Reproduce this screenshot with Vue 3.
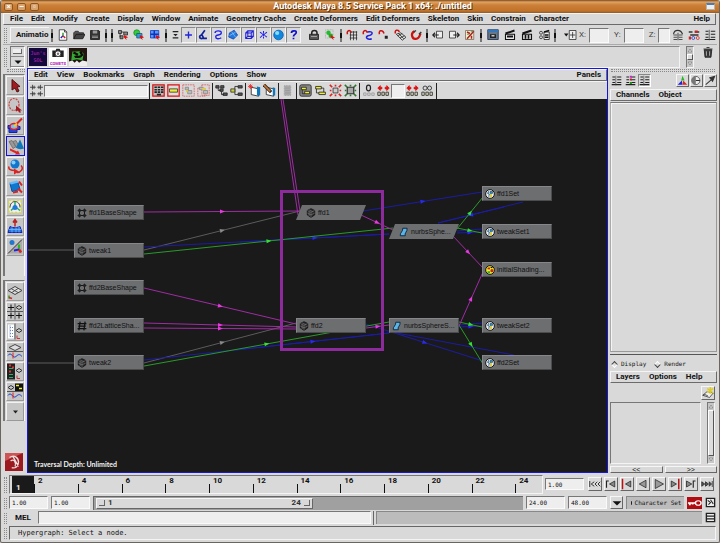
<script setup>
const icons = {
  newScene: '<path d="M3 1h7l3 3v11H3z" fill="#fff" stroke="#222"/><path d="M10 1v3h3" fill="none" stroke="#222"/><path d="M8 9V5" stroke="#2a2" stroke-width="2"/><path d="M8 9l-3 3" stroke="#22d" stroke-width="2"/><path d="M8 9l3 3" stroke="#d22" stroke-width="2"/>',
  open: '<path d="M1 13V5l2-2h4l1 2h6v2" fill="#555" stroke="#222"/><path d="M1 13l3-6h12l-3 6z" fill="#444" stroke="#111"/>',
  save: '<path d="M2 2h11l1 1v11H2z" fill="#333" stroke="#111"/><path d="M5 2h6v4H5z" fill="#999"/><path d="M4 9h8v1H4zM4 11h8v1H4z" fill="#aaa"/>',
  selHier: '<path d="M2 2h4v4H2zM9 4h5v4H9zM4 9h4v4H4z" fill="#888" stroke="#222"/><path d="M4 6v5M6 4h3" stroke="#222"/><path d="M9 8l6 3-3 1 1 3-4-4z" fill="#d11"/>',
  selObj: '<circle cx="5" cy="5" r="4" fill="#3c3" stroke="#183"/><path d="M5 6h7v6H5z" fill="#39d" stroke="#157"/><path d="M9 8l6 3-3 1 1 3-4-4z" fill="#d11"/>',
  selComp: '<path d="M2 2h11v10H2z" fill="#59f" stroke="#13b"/><path d="M7 2v10M2 7h11" stroke="#13b" stroke-width="2"/><path d="M9 8l6 3-3 1 1 3-4-4z" fill="#d11"/>',
  collapse: '<path d="M3 1h10v2H3zM3 12h10v2H3zM4 6h8l-4 4z" fill="#222"/>',
  plus: '<path d="M8 3v10M3 8h10" stroke="#22d" stroke-width="2"/>',
  handle: '<path d="M10 1L5 8M5 8c-4 1-3 6 1 5 3 0 1-4-1-5zM7 13h6" fill="none" stroke="#129" stroke-width="2.5"/>',
  curve: '<path d="M3 5c0-4 10-4 9 0 0 4-9 2-8 6 0 3 5 3 8 1" fill="none" stroke="#22e" stroke-width="2"/>',
  surface: '<path d="M2 5l7-4 5 7-6 6-7-3z" fill="#27d" stroke="#13a"/><path d="M5 3l6 8M2 9l9-5" stroke="#8cf"/>',
  lattice: '<path d="M4 5h8v8H4zM7 2h8v8H7zM4 5l3-3M12 5l3-3M12 13l3-3M4 13l3-3" fill="none" stroke="#22d" stroke-width="1.500"/>',
  particles: '<path d="M8 2v3M3 4l3 2M13 4l-3 2M3 12l3-3M8 13v-3M13 11l-3-2" stroke="#22e" stroke-width="1.500"/><circle cx="8" cy="7.500" r="2" fill="#22e"/>',
  ball: '<circle cx="8" cy="8" r="7" fill="#18d" stroke="#05a"/><circle cx="6" cy="5" r="3" fill="#8df"/>',
  question: '<path d="M5 5c0-4 7-4 7-1 0 3-4 3-4 6M8 12v2" fill="none" stroke="#11c" stroke-width="2.500"/>',
  lock: '<path d="M5 8V5c0-4 7-4 7 0v3" fill="none" stroke="#222" stroke-width="2"/><path d="M2 7h12v7H2z" fill="#555" stroke="#111"/><path d="M4 10h8" stroke="#bbb"/>',
  highlight: '<path d="M2 1h10v11H2z" fill="none" stroke="#999" stroke-dasharray="1 1"/><circle cx="6" cy="5" r="3" fill="#2b3"/><circle cx="9" cy="9" r="3" fill="#2a2"/><path d="M9 8l6 4-3 0 1 3-4-4z" fill="#d11"/>',
  snapGrid: '<path d="M5 4h10M5 8h10M5 12h10M6 3v12M10 3v12M14 3v12" stroke="#222"/><path d="M2 7c-2-5 4-7 5-2" fill="none" stroke="#c11" stroke-width="2"/>',
  snapCurve: '<path d="M7 4c9-2 8 4 1 5-5 2 0 6 5 4" fill="none" stroke="#22d" stroke-width="2"/><path d="M2 7c-2-5 4-7 5-2" fill="none" stroke="#c11" stroke-width="2"/>',
  snapPoint: '<path d="M9 9h4v4H9z" fill="#222"/><path d="M2 7c-2-5 4-7 6-1" fill="none" stroke="#c11" stroke-width="2"/>',
  snapPlane: '<path d="M3 7l6-2 7 6-5 4zM6 6l7 7M5 9l6-3M8 12l6-3" fill="none" stroke="#222"/><path d="M2 6c-2-5 4-6 5-2" fill="none" stroke="#c11" stroke-width="2"/>',
  magnet: '<path d="M6 3C0 6 3 14 8 13c4 0 5-4 6-7" fill="none" stroke="#c11" stroke-width="3"/><path d="M5 4l3-2M12 7l3-3" stroke="#333" stroke-width="2"/>',
  inConn: '<path d="M6 3h8v9H6z" fill="#eee" stroke="#222"/><path d="M1 8h8M4 5L1 8l3 3" fill="none" stroke="#222" stroke-width="1.5"/>',
  outConn: '<path d="M2 3h8v9H2z" fill="#eee" stroke="#222"/><path d="M7 8h8M12 5l3 3-3 3" fill="none" stroke="#222" stroke-width="1.5"/>',
  history: '<path d="M2 2h11v12H2z" fill="#eec" stroke="#765"/><path d="M4 13l9-10M4 4l4 2M10 9v4" stroke="#a22" stroke-width="2"/><path d="M4 7h3M9 3h3" stroke="#383"/>',
  renderView: '<path d="M1 1h14v13H1z" fill="#678" stroke="#124"/><path d="M1 1h14v3H1z" fill="#37b"/><path d="M4 7h8v5H4z" fill="#222"/><path d="M6 8h4v2H6z" fill="#ccc"/>',
  clap: '<path d="M2 7h12v7H2z" fill="#eee" stroke="#111" stroke-width="1.500"/><path d="M2 6l12-4M4 10h8" stroke="#111" stroke-width="2.500"/>',
  clapIpr: '<path d="M2 7h12v7H2z" fill="#ccc" stroke="#111" stroke-width="1.500"/><path d="M2 6l12-4" stroke="#111" stroke-width="3"/><path d="M6 8v5M10 8v5" stroke="#111" stroke-width="2"/>',
  clapSet: '<path d="M8 4h7v10H8z" fill="#eee" stroke="#111"/><path d="M8 4l7-2M9 8h5M9 11h5" stroke="#111" stroke-width="2"/><circle cx="4" cy="5" r="2" fill="none" stroke="#222"/><circle cx="4" cy="11" r="2" fill="none" stroke="#222"/>',
  coord: '<path d="M0 6h6l-3 4z" fill="#111"/><path d="M7 2h9v12H7z" fill="#eee" stroke="#222"/><path d="M11.500 4v8M8 8h7" stroke="#222"/>',
  attr: '<path d="M2 3h4M2 7h4M2 11h4M9 3h6M9 7h6M9 11h6M1 14h14" stroke="#222" stroke-width="1.500"/><path d="M7 1v14" stroke="#444"/>',
  toolSet: '<path d="M2 7C3 0 12 0 14 7" fill="none" stroke="#333" stroke-width="1.500"/><path d="M2 8h5M9 8h5M2 11h5M9 11h5M2 14h5M9 14h5M8 5v10" stroke="#222"/>',
  chanBox: '<path d="M1 4h5M9 4h6M3 8h11" stroke="#333" stroke-width="2"/><path d="M9 2h4v3H9zM1 10h3v4H1z" fill="#c22"/><circle cx="7" cy="12" r="2" fill="none" stroke="#23c"/><circle cx="13" cy="12" r="2" fill="none" stroke="#c22"/>',
  trash: '<path d="M3 5h10l-1 10H4z" fill="#444" stroke="#111"/><path d="M2 4h12M6 2h4M6 7v6M8 7v6M10 7v6" stroke="#111"/><path d="M6 7v6M10 7v6" stroke="#ccc"/>',
  arrow: '<path d="M5 2l8 7-3 .5 2 4-2 1-2-4-3 2z" fill="#a11c22" stroke="#511"/>',
  lasso: '<ellipse cx="7" cy="7" rx="5" ry="6" fill="none" stroke="#c44" stroke-width="1.200" stroke-dasharray="2 1"/><path d="M9 8l6 5-2 0 1 2-2 0-1-2-2 1z" fill="#a11c22"/>',
  paint: '<path d="M1 8h5v3H1zM2 11h8v4H2zM8 9h5v3H8z" fill="#24d" stroke="#12a"/><ellipse cx="7" cy="9" rx="4" ry="3" fill="#7bf" stroke="#d22" stroke-width="1.500"/><path d="M15 1l-6 6" stroke="#d22" stroke-width="2"/><path d="M10 6l-3 3" stroke="#ec2" stroke-width="2"/>',
  move: '<path d="M1 3l3-1 4 6-3 2zM5 3l3-1 3 6-3 1z" fill="#999" stroke="#777"/><path d="M12 1l-4 8c2 2 5 2 8 1z" fill="#17b"/><path d="M2 10l7 3 1-1 2 4-5 0 1-1-6-3z" fill="#d22"/>',
  rotate: '<circle cx="8" cy="5.500" r="4.500" fill="#17c"/><circle cx="6.500" cy="4" r="2" fill="#8cf"/><path d="M2 8c-1 3 2 4 6 4M14 7c3 3 0 7-4 7" fill="none" stroke="#d22" stroke-width="1.500"/><path d="M7 10l5 3-5 3z" fill="#d22"/>',
  scale: '<path d="M3 5l8-1 2 7-8 2z" fill="#17c" stroke="#05a"/><path d="M2 4l8-2 2 2-8 2z" fill="#6bf"/><path d="M12 3l3 4M11 10l4 4M6 14l5-1" stroke="#d22" stroke-width="2"/>',
  manip: '<path d="M2 2h12v12H2z" fill="#eee" stroke="#dd3" stroke-width="1.500" stroke-dasharray="2 2"/><path d="M3 9c0-8 10-8 10 0" fill="none" stroke="#444"/><path d="M8 8V3M8 8l-4 4M8 8l5 4" stroke="#2a6" stroke-width="1.500"/><circle cx="8" cy="9" r="2.500" fill="#27d"/>',
  soft: '<path d="M3 8c4 2 7 1 10 0l2 6H1z" fill="#27d" stroke="#12b"/><path d="M2 11h12M5 9v5M9 9v5M12 8v6" stroke="#8bf" stroke-width=".7"/><path d="M8 8V2M6 4l2-3 2 3" stroke="#b22" stroke-width="1.500" fill="#b22"/>',
  showManip: '<path d="M1 15L15 1v14z" fill="#aaa"/><path d="M1 15L15 1" stroke="#333"/><circle cx="5" cy="4" r="2.500" fill="#27c"/><path d="M12 11V6" stroke="#2b2" stroke-width="2"/><path d="M12 11l-5 1" stroke="#22d" stroke-width="2"/><path d="M12 11l2 3" stroke="#d22" stroke-width="2.500"/>',
  persp: '<path d="M1 7l7-4 7 4-7 4z" fill="#ddd" stroke="#444"/><path d="M4 5l7 4M11 5L5 9" stroke="#555"/><path d="M2 12v3" stroke="#2a2" stroke-width="1.500"/><path d="M2 14l3 1" stroke="#d22" stroke-width="1.500"/>',
  fourView: '<path d="M0 8h16M8 0v16" stroke="#555"/><path d="M4 1v6M1 4h6M4 9v6M1 12h6M12 9v6M9 12h6" stroke="#111"/><path d="M9 4l3-2 3 2-3 2z" fill="#ccc" stroke="#333"/>',
  outPersp: '<path d="M1 1h6v14H1z" fill="#fff"/><path d="M3 2v11M3 4h3M3 7h3M3 10h3M3 13h3" stroke="#68c" stroke-dasharray="1 1"/><path d="M8 0v16" stroke="#555"/><path d="M9 7l3-2 3 2-3 2z" fill="#ccc" stroke="#333"/><path d="M10 12v3h3" stroke="#c33" fill="none"/>',
  perspGraph: '<path d="M2 4l6-3 6 3-6 3z" fill="#ddd" stroke="#444"/><path d="M0 8h16" stroke="#555"/><path d="M1 12c3-5 5 4 8 1s4-2 6 0" fill="none" stroke="#24c"/><path d="M6 9v6" stroke="#d22"/>',
  hyperPersp: '<path d="M0 0h8v16H0z" fill="#222"/><path d="M2 2h2M5 4h2M2 8h2" stroke="#d33" stroke-width="2"/><path d="M2 5h4M2 11h4M2 14h4" stroke="#3a6"/><path d="M9 7l3-2 3 2-3 2z" fill="#ccc" stroke="#333"/><path d="M10 12v3h3" stroke="#c33" fill="none"/>',
  hyperGraph: '<path d="M1 4l3-2 3 2-3 2z" fill="#ccc" stroke="#333"/><path d="M8 0h8v8H8z" fill="#111"/><path d="M9 2h3M12 5h3" stroke="#ee3" stroke-width="1.500"/><path d="M0 8h16" stroke="#555"/><path d="M1 12c3-5 5 4 8 1s4-2 6 0" fill="none" stroke="#24c"/><path d="M6 9v6" stroke="#d22"/>',
  more: '<path d="M6 7h5l-2.500 3z" fill="#222"/>',
  logo: '<path d="M0 0h16v16H0z" fill="#9c1a1f"/><path d="M0 0h16L0 7z" fill="#c55"/><path d="M4 4c4-3 8 0 8 4s-3 6-6 5M5 7c3-2 5 1 4 5M7 3l5 9" fill="none" stroke="#edd" stroke-width="1.200"/>',
  frame: '<path d="M0 4h7M9 4h7M0 12h7M9 12h7M3 1v6M5 2v4M13 1v6M11 2v4M3 9v6M5 10v4M13 9v6M11 10v4" fill="none" stroke="#333"/>',
  hGraph: '<path d="M1 1h14v14H1z" fill="#bbb" stroke="#d11" stroke-width="1.500"/><path d="M3 4h3M7 4h3M11 4h3M3 7h3M7 7h3M11 7h3M3 10h3M7 10h3M11 10h3M6 13h5" stroke="#222" stroke-width="2"/>',
  hScene: '<path d="M1 1h14v14H1z" fill="#ddd" stroke="#d11" stroke-width="1.500"/><path d="M3 6h10v4H3z" fill="#ee3" stroke="#333"/>',
  hDash1: '<path d="M1 1h14v14H1z" fill="none" stroke="#d55" stroke-dasharray="2 1"/><path d="M4 4h4v3H4zM7 8h5v4H7z" fill="#bbb" stroke="#888"/><path d="M6 7v3" stroke="#dc4" stroke-width="2"/>',
  hDash2: '<path d="M1 5h9v10H1zM6 1h9v13H6z" fill="none" stroke="#d55" stroke-dasharray="2 1"/><path d="M3 4h4v3H3zM8 8h5v4H8z" fill="#bbb" stroke="#888"/><path d="M6 6h5" stroke="#dc4" stroke-width="2"/>',
  tree: '<path d="M1 2h4v3H1zM6 6h4v3H6zM10 11h5v3h-5zM7 2h4v3H7z" fill="#555" stroke="#222"/><path d="M4 5v3h3M8 9v4h3" fill="none" stroke="#222"/>',
  treeH: '<path d="M1 8h5M6 3v10M6 3h4M6 13h4" fill="none" stroke="#222"/><path d="M1 6h5v4H1z" fill="#cc3" stroke="#333"/><path d="M10 2h5v3h-5zM10 11h5v3h-5z" fill="#555" stroke="#222"/>',
  bookNew: '<path d="M4 4l9 2v9l-9-2z" fill="#fff" stroke="#222"/><path d="M11 3l4 1v10h-4z" fill="#17b"/><path d="M3 0v6M0 3h6M1 1l4 4M5 1L1 5" stroke="#e22"/>',
  bookEdit: '<path d="M4 4l9 2v9l-9-2z" fill="#fff" stroke="#222"/><path d="M12 4l3 1v9h-3z" fill="#17b"/><path d="M1 1l9 9" stroke="#222" stroke-width="4"/><path d="M1 1l8 8" stroke="#c73" stroke-width="2"/>',
  listGray: '<path d="M4 2h8v12H4z" fill="#aaa" stroke="#999" stroke-dasharray="1 1"/><path d="M5 5h6M5 8h6M5 11h6" stroke="#999"/>',
  clusterOn: '<rect x="1" y="1" width="14" height="14" rx="2" fill="#888" stroke="#222"/><path d="M3 4h6v3H3zM7 9h6v3H7z" fill="#ee3" stroke="#222"/><path d="M4 7v5h3" fill="none" stroke="#222"/>',
  cluster: '<path d="M2 3h7v3H2zM6 10h8v3H6z" fill="#ee3" stroke="#222"/><path d="M3 6v5h3M9 5h3v5" fill="none" stroke="#222"/>',
  expandR: '<path d="M5 5h6v6H5z" fill="#ccc" stroke="#333"/><path d="M1 1l3 3M12 4l3-3M1 15l3-3M12 12l3 3M8 1v2M8 13v2M1 8h2M13 8h2" stroke="#d22" stroke-width="2"/>',
  expandG: '<path d="M4 4h8v8H4z" fill="#aaa" stroke="#333" stroke-width="1.500"/><path d="M1 1l3 3M12 4l3-3M1 15l3-3M12 12l3 3M8 1v2M8 13v2M1 8h2M13 8h2" stroke="#373" stroke-width="2"/>',
  zero: '<ellipse cx="8" cy="5" rx="2.500" ry="3.500" fill="none" stroke="#222" stroke-width="1.500"/><path d="M2 11h3v3H2zM7 11h3v3H7zM12 11h3v3h-3z" fill="none" stroke="#999"/>',
  depth: '<path d="M1 5l3-3v2h2v2H4v2zM15 5l-3-3v2h-2v2h2v2z" fill="#d11" stroke="#d11"/><path d="M1 10h3v4H1zM6 10h3v4H6zM11 10h3v4h-3z" fill="none" stroke="#443" stroke-width="1.200"/>',
  infinite: '<circle cx="5" cy="5" r="2.500" fill="none" stroke="#222"/><circle cx="10.500" cy="5" r="2.500" fill="none" stroke="#222"/><path d="M1 10h3v4H1zM6 10h3v4H6zM11 10h3v4h-3z" fill="none" stroke="#443" stroke-width="1.200"/>',
  rgb: '<path d="M8 1l3 7H6z" fill="#2b2"/><path d="M7 8l1 6-7 0z" fill="#22d"/><path d="M9 8l6 6H8z" fill="#d22"/>',
  clock: '<circle cx="7" cy="8" r="6" fill="#eee" stroke="#333"/><path d="M7 2a6 6 0 0 0 0 12z" fill="#777"/><path d="M7 8h6" stroke="#333" stroke-width="1.500"/>',
  slope: '<path d="M1 14l8-7M7 4l7-2-3 7z" fill="#333" stroke="#333" stroke-width="1.500"/>',
  chanColor: '<path d="M2 3h4M2 7h4M2 11h4M9 3h6M9 7h6M9 11h6M1 14h14" stroke="#222" stroke-width="1.500"/><path d="M7 1h3v3H7z" fill="#c2c"/><path d="M7 5h3v3H7z" fill="#b22"/><path d="M7 10h3v3H7z" fill="#191"/>',
  newLayer: '<path d="M1 11l6-5 8 2-5 6z" fill="#eee" stroke="#333"/><path d="M1 11l3-1 4 2" fill="none" stroke="#333"/><path d="M11 0v9M7 2l8 6M7 7l8-5" stroke="#dc2" stroke-width="2"/>',
  key: '<path d="M0 0h16v16H0z" fill="#b00d12"/><path d="M1 8h8M3 8v3M6 8v2" stroke="#fff" stroke-width="2"/><circle cx="12" cy="8" r="3" fill="none" stroke="#fff" stroke-width="1.500"/>',
  prefs: '<path d="M2 2h12v12H2z" fill="#eee" stroke="#222" stroke-width="2"/><path d="M4 5l4 3-3 3M8 4l4 6" stroke="#222" fill="none" stroke-width="1.500"/>',
  script: '<path d="M2 2h12v12H2z" fill="#eee" stroke="#222" stroke-width="2"/><path d="M2 6h12M2 10h12" stroke="#222" stroke-width="1.500"/>',
  down: '<path d="M1 5h14l-7 7z" fill="#111"/>',
  pToStart: '<path d="M1 4v8M7 5L3 8l4 3M11 5L8 8l3 3M15 5l-3 3 3 3" fill="none" stroke="#222" stroke-width="1.200"/>',
  pStepBack: '<path d="M2 13V4h3" fill="none" stroke="#222" stroke-width="1.500"/><path d="M13 4L6 8l7 4z" fill="#888" stroke="#222"/>',
  pKeyBack: '<path d="M2 1v14" stroke="#b11" stroke-width="2"/><path d="M13 4L6 8l7 4z" fill="#888" stroke="#222"/>',
  pBack: '<path d="M12 3L3 8l9 5z" fill="#999" stroke="#222"/>',
  pPlay: '<path d="M3 2v12l11-6z" fill="#999" stroke="#222"/>',
  pKeyFwd: '<path d="M13 1v14" stroke="#b11" stroke-width="2"/><path d="M3 4l7 4-7 4z" fill="#888" stroke="#222"/>',
  pStepFwd: '<path d="M14 4h-3v9" fill="none" stroke="#222" stroke-width="1.500"/><path d="M2 4l7 4-7 4z" fill="#888" stroke="#222"/>',
  pToEnd: '<path d="M1 5l4 3-4 3zM6 5l4 3-4 3zM11 5l3 3-3 3zM15 4v8" fill="#555" stroke="#222"/>',
  nLattice: '<path d="M4 1v14M12 1v14M1 4h14M1 12h14" stroke="#111" stroke-width="1.500"/><path d="M2 2h4v4H2zM10 2h4v4h-4zM2 10h4v4H2zM10 10h4v4h-4z" fill="#222"/>',
  nLattice2: '<path d="M5 1L3 15M13 1l-2 14M1 4h14M2 8h12M1 12h14" stroke="#111" stroke-width="2"/>',
  nCube: '<path d="M8 1l6 3v7l-6 4-6-4V4z" fill="#2a2a2a" stroke="#000"/><path d="M2 4l6 3 6-3M8 7v8M5 3l6 3M5 6v7M2 8l6 3 6-3" fill="none" stroke="#888" stroke-width=".8"/>',
  nSurf: '<path d="M6 2h7c1 5-5 8-3 12H2C1 9 7 7 6 2z" fill="#5ab4e8" stroke="#10253a" stroke-width="1.500"/>',
  nSet: '<circle cx="8" cy="8" r="7" fill="#eee" stroke="#111" stroke-width="1.500"/><path d="M6 3l-2 4 3 1-1 5M8 4h4v3H8z" fill="#29c" stroke="#246"/><path d="M8 8h3v5H8z" fill="#dc3"/>',
  nShade: '<circle cx="8" cy="8" r="7" fill="#ee2" stroke="#111" stroke-width="1.500"/><path d="M4 4h4v3H4z" fill="#c22"/><circle cx="11" cy="9" r="2.500" fill="#c22"/><path d="M4 10h4v3H4z" fill="#2a5"/><path d="M9 3h3v2H9z" fill="#111"/>',
  shelfCam: '<path d="M0 0h16v16H0z" fill="#fff"/><path d="M1 3h4l1-2h4l1 2h4v8H1z" fill="#222"/><circle cx="8" cy="7" r="3.500" fill="#fff" stroke="#222"/><circle cx="8" cy="7" r="1.500" fill="#777"/>',
  shelfMask: '<path d="M0 0h16v16H0z" fill="#231510"/><path d="M3 3c3 1 7-2 10 2l-1 6-5-1-5 1z" fill="#3a3"/><path d="M4 4l4 2M10 3l2 4M5 8c2-1 3 1 6-1" stroke="#120a04" stroke-width="2"/><path d="M0 12l3-1 2 2 2-2 2 2 3-2 4 1v4H0z" fill="#eee"/>',
  up: '<path d="M3 12h10L8 4z" fill="#ddd" stroke="#444"/>',
  dn: '<path d="M3 4h10l-5 8z" fill="#ddd" stroke="#444"/>',
}

const menus = ['File', 'Edit', 'Modify', 'Create', 'Display', 'Window', 'Animate', 'Geometry Cache', 'Create Deformers', 'Edit Deformers', 'Skeleton', 'Skin', 'Constrain', 'Character']
const graphMenus = ['Edit', 'View', 'Bookmarks', 'Graph', 'Rendering', 'Options', 'Show']

const statusGroups = [
  { items: ['newScene', 'open', 'save'] },
  { items: [] },
  { items: ['selHier', 'selObj', 'selComp'] },
  { items: ['collapse'], kind: 'slim' },
  { items: ['plus', 'handle', 'curve', 'surface', 'lattice', 'particles', 'ball', 'question'], kind: 'pressed', join: true },
  { items: ['lock', 'highlight'], kind: 'spaced', join: true },
  { items: ['snapGrid', 'snapCurve', 'snapPoint', 'snapPlane', 'magnet'] },
  { items: ['inConn', 'outConn', 'history'] },
  { items: ['renderView', 'clap', 'clapIpr', 'clapSet'], kind: 'wide' },
]

const graphTools = [
  ['hGraph', 'hScene', 'hDash1', 'hDash2'],
  ['tree', 'treeH'],
  ['bookNew', 'bookEdit'],
  ['listGray'],
  ['clusterOn', 'cluster', 'expandR', 'expandG'],
]

const tools = ['arrow', 'lasso', 'paint', 'move', 'rotate', 'scale', 'manip', 'soft', 'showManip']
const layouts = ['persp', 'fourView', 'outPersp', 'perspGraph', 'hyperPersp', 'hyperGraph', 'more']
const playback = ['pToStart', 'pStepBack', 'pKeyBack', 'pBack', 'pPlay', 'pKeyFwd', 'pStepFwd', 'pToEnd']
const frames = [2, 4, 6, 8, 10, 12, 14, 16, 18, 20, 22, 24]

// Graph space origin of the visible canvas
const view = { x: 28, y: 99 }

const nodes = [
  { name: 'ffd1BaseShape', x: 74, y: 205, icon: 'nLattice' },
  { name: 'tweak1', x: 74, y: 243, icon: 'nCube' },
  { name: 'ffd2BaseShape', x: 74, y: 280, icon: 'nLattice' },
  { name: 'ffd2LatticeSha...', x: 74, y: 318, icon: 'nLattice2' },
  { name: 'tweak2', x: 74, y: 355, icon: 'nCube' },
  { name: 'ffd1', x: 296, y: 205, icon: 'nCube', slanted: true },
  { name: 'ffd2', x: 296, y: 318, icon: 'nCube' },
  { name: 'nurbsSphe...', x: 389, y: 224, icon: 'nSurf', slanted: true },
  { name: 'nurbsSphereS...', x: 389, y: 318, icon: 'nSurf' },
  { name: 'ffd1Set', x: 482, y: 186, icon: 'nSet' },
  { name: 'tweakSet1', x: 482, y: 224, icon: 'nSet' },
  { name: 'initialShading...', x: 482, y: 262, icon: 'nShade' },
  { name: 'tweakSet2', x: 482, y: 318, icon: 'nSet' },
  { name: 'ffd2Set', x: 482, y: 355, icon: 'nSet' },
]

// kind, x1, y1, x2, y2, arrow
const edges = [
  ['gray', 28, 250, 74, 250, false],
  ['gray', 28, 363, 74, 363, false],
  ['gray', 144, 250, 300, 211, true],
  ['gray', 144, 363, 300, 322, true],
  ['blue', 144, 247, 389, 234, false],
  ['blue', 240, 242, 389, 234, true],
  ['blue', 144, 360, 389, 333, false],
  ['blue', 236, 350, 389, 333, true],
  ['blue', 363, 211, 482, 192, true],
  ['blue', 523, 202, 438, 223, false],
  ['blue', 504, 207, 438, 223, true],
  ['blue', 457, 231, 482, 229, false],
  ['blue', 457, 233, 482, 232, true],
  ['blue', 366, 324, 483, 361, true],
  ['blue', 397, 333, 514, 355, false],
  ['blue', 459, 325, 482, 323, false],
  ['blue', 459, 327, 482, 326, true],
  ['green', 144, 254, 393, 228, true],
  ['green', 144, 366, 389, 322, true],
  ['green', 457, 229, 483, 197, true],
  ['green', 457, 228, 482, 233, true],
  ['green', 459, 322, 482, 327, true],
  ['green', 459, 325, 483, 364, true],
  ['magenta', 144, 212, 300, 211, true],
  ['magenta', 281, 99, 298, 215, false],
  ['magenta', 283, 99, 300, 211, false],
  ['magenta', 361, 215, 393, 230, true],
  ['magenta', 144, 288, 296, 324, true],
  ['magenta', 144, 323, 296, 327, true],
  ['magenta', 144, 328, 296, 329, true],
  ['magenta', 366, 328, 389, 325, true],
  ['magenta', 453, 236, 483, 268, true],
  ['magenta', 459, 326, 483, 272, true],
].map(([kind, x1, y1, x2, y2, arrow]) => ({
  kind,
  arrow,
  x1: x1 - view.x,
  y1: y1 - view.y,
  x2: x2 - view.x,
  y2: y2 - view.y,
  mid: `translate(${(x1 + x2) / 2 - view.x} ${(y1 + y2) / 2 - view.y}) rotate(${(Math.atan2(y2 - y1, x2 - x1) * 180) / Math.PI})`,
}))
</script>

<template>
  <div class="window">
    <header class="title">
      <div class="wm">
        <button aria-label="Close">×</button>
        <button aria-label="Minimize">–</button>
        <button aria-label="Maximize">▫</button>
      </div>
      <h1>Autodesk Maya 8.5 Service Pack 1 x64: ./untitled</h1>
      <span class="wm-icon"></span>
    </header>

    <nav class="menubar main-menu">
      <button v-for="m in menus" :key="m">{{ m }}</button>
      <button class="end">Help</button>
    </nav>

    <div class="status">
      <span class="grip"></span>
      <button class="mode">Animatio</button>
      <template v-for="(g, i) in statusGroups" :key="i">
        <span v-if="!g.join" class="sep"></span>
        <div v-if="g.items.length" class="group" :class="g.kind">
          <button v-for="n in g.items" :key="n" :aria-label="n"><svg viewBox="0 0 16 16" v-html="icons[n]"></svg></button>
        </div>
      </template>
      <span class="sep"></span>
      <button class="coord" aria-label="Coordinate entry"><svg viewBox="0 0 16 16" v-html="icons.coord"></svg></button>
      <label class="axis">X: <input type="text" /></label>
      <label class="axis">Y: <input type="text" /></label>
      <label class="axis last">Z: <input type="text" /></label>
      <div class="group right-icons">
        <button v-for="n in ['toolSet', 'chanBox', 'attr']" :key="n" :aria-label="n"><svg viewBox="0 0 16 16" v-html="icons[n]"></svg></button>
      </div>
    </div>

    <div class="shelf">
      <span class="grip"></span>
      <div class="shelf-pick">
        <button aria-label="Shelf tab"><i></i></button>
        <button aria-label="Shelf menu"><svg viewBox="0 0 16 16" v-html="icons.down"></svg></button>
      </div>
      <div class="shelf-box">
        <button class="sol">Jun's<br />SOL</button>
        <button class="cam"><svg viewBox="0 0 16 16" v-html="icons.shelfCam"></svg><em>COMETS</em></button>
        <button class="mask" aria-label="Mask"><svg viewBox="0 0 16 16" v-html="icons.shelfMask"></svg></button>
      </div>
      <div class="mini-scroll"><svg viewBox="0 0 16 16" v-html="icons.up"></svg><i></i><svg viewBox="0 0 16 16" v-html="icons.dn"></svg></div>
      <button class="trash" aria-label="Trash"><svg viewBox="0 0 16 16" v-html="icons.trash"></svg></button>
    </div>

    <main class="work">
      <aside class="left">
        <div class="hgrip"></div>
        <div class="toolbox">
          <button v-for="t in tools" :key="t" :class="{ active: t === 'move' }" :aria-label="t"><svg viewBox="0 0 16 16" v-html="icons[t]"></svg></button>
          <span class="blank"></span>
        </div>
        <div class="toolbox layouts">
          <button v-for="t in layouts" :key="t" :aria-label="t"><svg viewBox="0 0 16 16" v-html="icons[t]"></svg></button>
        </div>
        <svg class="logo" viewBox="0 0 16 16" v-html="icons.logo"></svg>
      </aside>

      <section class="graph">
        <nav class="menubar">
          <button v-for="m in graphMenus" :key="m">{{ m }}</button>
          <button class="end">Panels</button>
        </nav>
        <div class="graph-tools">
          <button aria-label="Frame"><svg viewBox="0 0 16 16" v-html="icons.frame"></svg></button>
          <input class="find" type="text" aria-label="Find node" />
          <template v-for="(g, i) in graphTools" :key="i">
            <span class="line"></span>
            <button v-for="n in g" :key="n" :aria-label="n"><svg viewBox="0 0 16 16" v-html="icons[n]"></svg></button>
          </template>
          <span class="line"></span>
          <button aria-label="Depth zero"><svg viewBox="0 0 16 16" v-html="icons.zero"></svg></button>
          <button aria-label="Less depth"><svg viewBox="0 0 16 16" v-html="icons.depth"></svg></button>
          <input class="depth" type="text" aria-label="Depth" />
          <button aria-label="More depth"><svg viewBox="0 0 16 16" v-html="icons.depth"></svg></button>
          <button aria-label="Unlimited depth"><svg viewBox="0 0 16 16" v-html="icons.infinite"></svg></button>
          <span class="line"></span>
        </div>
        <div class="canvas">
          <svg class="edges">
            <g v-for="(e, i) in edges" :key="i" :class="e.kind">
              <line :x1="e.x1" :y1="e.y1" :x2="e.x2" :y2="e.y2" />
              <path v-if="e.arrow" d="M-2 -2L3 0L-2 2z" :transform="e.mid" />
            </g>
          </svg>
          <div v-for="n in nodes" :key="n.name" class="node" :class="{ slanted: n.slanted }" :style="{ left: n.x - view.x + 'px', top: n.y - view.y + 'px' }">
            <svg viewBox="0 0 16 16" v-html="icons[n.icon]"></svg>
            <span>{{ n.name }}</span>
          </div>
          <div class="marquee"></div>
          <p class="depth-note">Traversal Depth: Unlimited</p>
        </div>
      </section>

      <aside class="right">
        <div class="hgrip"></div>
        <div class="chan-tools">
          <button v-for="n in ['attr', 'chanColor']" :key="n" :aria-label="n"><svg viewBox="0 0 16 16" v-html="icons[n]"></svg></button>
          <button class="in" aria-label="Channels and layers"><svg viewBox="0 0 16 16" v-html="icons.attr"></svg></button>
          <span class="spring"></span>
          <button v-for="n in ['rgb', 'clock', 'slope']" :key="n" class="out" :aria-label="n"><svg viewBox="0 0 16 16" v-html="icons[n]"></svg></button>
        </div>
        <nav class="menubar">
          <button>Channels</button>
          <button>Object</button>
        </nav>
        <div class="channels"></div>
        <div class="modes">
          <label><input type="radio" name="layerMode" checked />Display</label>
          <label><input type="radio" name="layerMode" />Render</label>
        </div>
        <nav class="menubar">
          <button>Layers</button>
          <button>Options</button>
          <button>Help</button>
        </nav>
        <div class="layer-new"><button class="out" aria-label="New layer"><svg viewBox="0 0 16 16" v-html="icons.newLayer"></svg></button></div>
        <div class="layer-area">
          <div class="layer-list"></div>
          <div class="vscroll"><svg viewBox="0 0 16 16" v-html="icons.up"></svg><i></i><svg viewBox="0 0 16 16" v-html="icons.dn"></svg></div>
        </div>
        <div class="pager"><button>&lt;&lt;</button><button>&gt;&gt;</button></div>
      </aside>
    </main>

    <div class="row timeline">
      <span class="grip"></span>
      <div class="track">
        <span class="current">1</span>
        <span v-for="f in frames" :key="f" class="frame" :class="{ tail: f === 24 }">{{ f }}</span>
      </div>
      <input class="num" type="text" value="1.00" aria-label="Current time" />
      <div class="play">
        <button v-for="p in playback" :key="p" class="out" :aria-label="p"><svg viewBox="0 0 16 16" v-html="icons[p]"></svg></button>
      </div>
    </div>

    <div class="row range">
      <span class="grip"></span>
      <input class="num" type="text" value="1.00" aria-label="Animation start" />
      <input class="num" type="text" value="1.00" aria-label="Playback start" />
      <div class="slider"><div class="thumb"><i></i><span>1</span><span class="to">24</span><i></i></div></div>
      <input class="num" type="text" value="24.00" aria-label="Playback end" />
      <input class="num" type="text" value="48.00" aria-label="Animation end" />
      <button class="out drop" aria-label="Character menu"><svg viewBox="0 0 16 16" v-html="icons.down"></svg></button>
      <button class="charset"><b></b>Character Set</button>
      <button class="key" aria-label="Auto key"><svg viewBox="0 0 16 16" preserveAspectRatio="none" v-html="icons.key"></svg></button>
      <button class="small" aria-label="Preferences"><svg viewBox="0 0 16 16" v-html="icons.prefs"></svg></button>
    </div>

    <div class="row mel">
      <span class="grip"></span>
      <label for="mel">MEL</label>
      <input id="mel" type="text" />
      <span class="split"></span>
      <output></output>
      <button class="small" aria-label="Script editor"><svg viewBox="0 0 16 16" v-html="icons.script"></svg></button>
    </div>

    <footer class="row help">
      <span class="grip"></span>
      <p>Hypergraph: Select a node.</p>
    </footer>
  </div>
</template>

<style>
body {
  margin: 0;
  background: #d9d9d9;
}
</style>

<style scoped>
* {
  box-sizing: border-box;
}
.window {
  min-height: 100vh;
  display: flex;
  flex-direction: column;
  background: #d9d9d9;
  border: 1px solid #6a665f;
  border-top: 0;
  border-radius: 3px 3px 2px 2px;
  padding: 0 2px 2px;
  font: 700 8px/10px Roboto, sans-serif;
  color: #111;
  overflow: hidden;
}
button {
  display: flex;
  align-items: center;
  justify-content: center;
  flex: none;
  margin: 0;
  padding: 0;
  border: 0;
  background: none;
  font: inherit;
  color: inherit;
  white-space: nowrap;
}
input {
  margin: 0;
  padding: 0 2px;
  min-width: 0;
  background: #eee;
  border: 1px solid;
  border-color: #777 #fafafa #fafafa #777;
  border-radius: 0;
  font: 6px/8px "DejaVu Sans Mono", monospace;
  color: #111;
}
svg {
  display: block;
  width: 12px;
  height: 12px;
  flex: none;
}
p,
h1 {
  margin: 0;
}
.title {
  height: 13px;
  margin: 0 -2px;
  display: flex;
  align-items: center;
  background: linear-gradient(#7b4a1c, #e0a262 2px, #cc8038 5px, #c07228 11px, #8c5a2c);
  padding: 0 4px 0 3px;
}
.title h1 {
  flex: 1;
  text-align: center;
  font: 700 9px/11px Roboto, sans-serif;
  color: #fff;
  text-shadow: 1px 1px 0 #5a3410;
}
.wm {
  display: flex;
  gap: 4px;
}
.wm button {
  width: 9px;
  height: 8px;
  border: 1px solid #8a5626;
  background: #d9a26c;
  color: #fff;
  font-size: 8px;
  line-height: 6px;
  border-radius: 2px;
}
.wm-icon {
  width: 9px;
  height: 7px;
  background: #eee;
  border: 1px solid #b9b2a6;
  border-top: 2px solid #4a7ab8;
}
.menubar {
  display: flex;
  align-items: center;
  gap: 9px;
  height: 12px;
  padding: 0 5px;
  border: 1px solid;
  border-color: #f4f4f4 #6b6b6b #6b6b6b #f4f4f4;
}
.menubar .end {
  margin-left: auto;
}
.main-menu {
  gap: 8px;
  padding-left: 6px;
  margin-right: 1px;
}
.grip {
  width: 3px;
  flex: none;
  margin: 2px 0 1px;
  border-right: 1px dotted #888;
  border-left: 1px dotted #888;
}
.hgrip {
  height: 3px;
  margin: 1px 2px 0 4px;
  border-top: 1px dotted #888;
  border-bottom: 1px dotted #888;
}
.status {
  display: flex;
  align-items: center;
  height: 20px;
  padding: 1px 0 0 1px;
  border-bottom: 1px solid #aaa;
}
.status .grip {
  height: 15px;
}
.mode {
  width: 39px;
  height: 16px;
  margin-left: 3px;
  padding-left: 5px;
  border-top: 1px solid #f4f4f4;
  border-left: 1px solid #f4f4f4;
  border-bottom: 1px solid #888;
  justify-content: flex-start;
}
.sep {
  width: 2px;
  height: 13px;
  margin: 0 2px;
  flex: none;
  background: linear-gradient(#777 4px, #111 4px 9px, #777 9px);
}
.group {
  display: flex;
  flex: none;
}
.group button {
  width: 16px;
  height: 16px;
}
.group.slim button {
  width: 12px;
}
.group.slim svg {
  width: 9px;
}
.group.pressed button {
  width: 15px;
  border: 1px solid;
  border-color: #888 #f4f4f4 #f4f4f4 #888;
}
.group.pressed svg {
  width: 11px;
}
.group.spaced {
  margin-left: 5px;
}
.group.wide button {
  width: 17px;
}
.coord {
  width: 18px;
  height: 16px;
  margin: 0 0 0 3px;
}
.coord svg {
  width: 16px;
}
.axis {
  display: flex;
  align-items: center;
  gap: 3px;
  font-weight: 400;
  color: #444;
  margin-right: 5px;
}
.axis input {
  width: 20px;
  height: 15px;
}
.axis.last {
  margin-right: 0;
}
.axis.last input {
  width: 12px;
}
.right-icons {
  margin-left: auto;
}
.shelf {
  display: flex;
  height: 23px;
  padding: 1px 1px 0;
}
.shelf-pick {
  width: 15px;
  margin: 0 2px 0 3px;
  display: flex;
  flex-direction: column;
  border: 1px solid;
  border-color: #777 #fff #fff #777;
}
.shelf-pick button {
  flex: 1;
  border-bottom: 1px solid #888;
}
.shelf-pick i {
  width: 9px;
  height: 5px;
  background: #eee;
  border-right: 1px solid #666;
  border-bottom: 1px solid #666;
}
.shelf-pick svg {
  width: 8px;
  height: 8px;
}
.shelf-box {
  flex: 1;
  display: flex;
  align-items: flex-start;
  gap: 2px;
  padding: 1px 0 0 1px;
  border: 1px solid;
  border-color: #888 #f4f4f4 #f4f4f4 #888;
}
.shelf-box button {
  width: 18px;
  height: 18px;
}
.shelf-box svg {
  width: 18px;
  height: 18px;
}
.shelf-box .sol {
  background: #14083c;
  color: #c428c4;
  font: 5px/7px "DejaVu Sans Mono", monospace;
}
.shelf-box .cam {
  flex-direction: column;
  background: #fff;
}
.shelf-box .cam svg {
  height: 13px;
}
.cam em {
  font: 700 4px/5px Roboto, sans-serif;
  color: #b010b0;
}
.mini-scroll,
.vscroll {
  width: 8px;
  margin: 0 8px 0 6px;
  display: flex;
  flex-direction: column;
  align-items: center;
  background: #c6c6c6;
  border: 1px solid;
  border-color: #777 #f4f4f4 #f4f4f4 #777;
}
.mini-scroll svg,
.vscroll svg {
  width: 6px;
  height: 7px;
}
.mini-scroll i,
.vscroll i {
  flex: 1;
  width: 6px;
  background: #ddd;
  border: 1px solid;
  border-color: #fff #555 #555 #fff;
}
.trash {
  width: 12px;
  height: 12px;
  margin-right: 2px;
}
.work {
  flex: 1;
  display: grid;
  grid-template-columns: 24px 1fr 109px;
}
.left {
  display: flex;
  flex-direction: column;
}
.toolbox {
  width: 22px;
  margin: 2px 0 0;
  padding: 1px 0 0 1px;
  border-left: 2px solid #777;
  border-top: 1px solid #777;
  border-right: 1px solid #f8f8f8;
  display: flex;
  flex-direction: column;
  gap: 1px;
}
.toolbox button {
  height: 19px;
  width: 18px;
  border: 1px solid;
  border-color: #f2f2f2 #999 #999 #f2f2f2;
  background: #c6c6c6;
}
.toolbox svg {
  width: 16px;
  height: 17px;
}
.toolbox .active {
  border-color: #1414d0;
  height: 20px;
  width: 19px;
}
.toolbox .blank {
  height: 19px;
}
.layouts {
  margin-top: 4px;
}
.logo {
  width: 18px;
  height: 18px;
  margin: auto 0 2px 2px;
}
.graph {
  min-width: 0;
  display: flex;
  flex-direction: column;
  border: 1px solid #1616d8;
}
.graph-tools {
  display: flex;
  align-items: center;
  height: 18px;
  padding-left: 1px;
  border-top: 1px solid #f4f4f4;
}
.graph-tools button {
  width: 15px;
  height: 16px;
}
.graph-tools svg {
  width: 13px;
  height: 13px;
}
.find {
  width: 104px;
  height: 12px;
}
.depth {
  width: 14px;
  height: 14px;
}
.line {
  width: 1px;
  height: 16px;
  margin: 0 1px;
  background: #222;
}
.canvas {
  flex: 1;
  min-height: 340px;
  position: relative;
  background: #1a1a1a;
  overflow: hidden;
}
.edges {
  position: absolute;
  inset: 0;
  width: 100%;
  height: 100%;
}
.edges line {
  stroke: var(--c);
  stroke-width: 1;
}
.edges path {
  fill: var(--a);
}
.gray {
  --c: #5c5c5c;
  --a: #8a8a8a;
}
.blue {
  --c: #1c1ca4;
  --a: #2a2af0;
}
.green {
  --c: #2a9a2a;
  --a: #35e035;
}
.magenta {
  --c: #a02ca4;
  --a: #e838e0;
}
.node {
  position: absolute;
  width: 70px;
  height: 15px;
  display: flex;
  align-items: center;
  gap: 2px;
  padding-left: 2px;
  background: #6c6e70;
  border: 1px solid;
  border-color: #85878a #4a4c4e #4a4c4e #85878a;
  font: 7px/12px "Liberation Sans", sans-serif;
  white-space: nowrap;
}
.node svg {
  width: 10px;
  height: 10px;
}
.node.slanted {
  border: 0;
  padding-left: 10px;
  clip-path: polygon(6px 0, 100% 0, 64px 100%, 0 100%);
}
.marquee {
  position: absolute;
  left: 252px;
  top: 91px;
  width: 104px;
  height: 161px;
  border: 3px solid #8d2b9c;
}
.depth-note {
  position: absolute;
  left: 6px;
  bottom: 3px;
  font: 700 7px/10px Lato, sans-serif;
  color: #f2f2f2;
}
.right {
  display: flex;
  flex-direction: column;
  padding-left: 2px;
}
.right .hgrip {
  margin-left: 1px;
}
.chan-tools {
  height: 17px;
  display: flex;
  align-items: center;
  gap: 1px;
}
.chan-tools button {
  width: 13px;
  height: 13px;
}
.chan-tools svg {
  width: 11px;
  height: 11px;
}
.chan-tools .in {
  border: 1px solid;
  border-color: #888 #fff #fff #888;
}
.out {
  border: 1px solid;
  border-color: #f6f6f6 #666 #666 #f6f6f6;
}
.spring {
  flex: 1;
}
.channels {
  flex: 1;
  margin-top: 1px;
  border: 1px solid;
  border-color: #777 #999 #999 #aaa;
  box-shadow: inset 1px 1px #f4f4f4;
}
.modes {
  display: flex;
  gap: 9px;
  height: 17px;
  margin-top: 2px;
  padding: 2px 0 0 2px;
  border-top: 1px solid #555;
  font: 6px/8px "DejaVu Sans Mono", monospace;
}
.modes label {
  display: flex;
  align-items: center;
  gap: 4px;
}
.modes input {
  appearance: none;
  width: 5px;
  height: 5px;
  padding: 0;
  transform: rotate(45deg);
  border-color: #fff #444 #444 #fff;
  background: #ddd;
}
.modes input:checked {
  border-color: #444 #fff #fff #444;
}
.layer-new {
  height: 19px;
  display: flex;
  justify-content: flex-end;
  align-items: center;
  padding-right: 2px;
}
.layer-new button {
  width: 14px;
  height: 14px;
}
.layer-area {
  display: flex;
  height: 62px;
}
.layer-list {
  flex: 1;
  border: 1px solid;
  border-color: #777 #f4f4f4 #f4f4f4 #777;
}
.vscroll {
  margin: 0 2px 0 6px;
}
.pager {
  display: flex;
  gap: 2px;
  padding: 2px 0 0;
}
.pager button {
  flex: 1;
  height: 7px;
  border: 1px solid;
  border-color: #f6f6f6 #666 #666 #f6f6f6;
  font: 7px/5px "Liberation Sans", sans-serif;
}
.row {
  display: flex;
  align-items: center;
  height: 15px;
  padding: 0 1px;
}
.row .grip {
  height: 11px;
  margin-right: 2px;
}
.num {
  width: 39px;
  height: 12px;
}
.timeline {
  height: 22px;
}
.timeline .grip {
  height: 16px;
}
.track {
  flex: 1;
  display: flex;
  height: 19px;
  margin-right: 2px;
  border: 1px solid;
  border-color: #777 #f4f4f4 #f4f4f4 #777;
}
.current {
  width: 22px;
  margin-left: 2px;
  background: #1a1a1a;
  color: #eee;
  padding: 7px 0 0 4px;
}
.frame {
  flex: 7 0 0;
  padding-left: 4px;
  line-height: 9px;
  background: linear-gradient(#111, #111) left bottom / 1px 9px no-repeat;
}
.frame.tail {
  flex-grow: 4;
}
.play {
  display: flex;
  gap: 2px;
  margin: 0 2px 0 4px;
}
.play button {
  width: 14px;
  height: 14px;
}
.range {
  gap: 3px;
}
.range .grip,
.mel .grip {
  margin-right: 0;
}
.range .num {
  height: 13px;
}
.range > .grip + .num {
  margin-left: -1px;
}
.slider {
  flex: 1;
  height: 14px;
  padding: 1px 2px;
  background: #a0a0a0;
  border-top: 1px solid #666;
  border-left: 1px solid #666;
}
.thumb {
  display: flex;
  align-items: center;
  gap: 3px;
  width: 51%;
  height: 11px;
  padding: 0 2px;
  background: #d9d9d9;
  border: 1px solid;
  border-color: #f6f6f6 #666 #666 #f6f6f6;
  color: #333;
}
.thumb i {
  width: 6px;
  height: 6px;
  border-right: 1px solid #666;
  border-bottom: 1px solid #666;
}
.to {
  margin-left: auto;
}
.drop {
  width: 13px;
  height: 13px;
}
.drop svg {
  width: 10px;
}
.charset {
  width: 58px;
  height: 13px;
  gap: 3px;
  background: #bcbcbc;
  border-top: 1px solid #888;
  border-left: 1px solid #888;
  font: 6px/8px "DejaVu Sans Mono", monospace;
}
.charset b {
  width: 2px;
  height: 4px;
  border-right: 1px solid #222;
  border-radius: 2px;
}
.key {
  width: 15px;
  height: 12px;
}
.key svg {
  width: 15px;
  height: 12px;
}
.small {
  width: 11px;
  height: 13px;
}
.small svg {
  width: 11px;
  height: 11px;
}
.mel label {
  padding-left: 8px;
  width: 31px;
}
.mel input {
  flex: 331 0 0;
  height: 13px;
}
.split {
  width: 2px;
  height: 14px;
  margin: 0 1px 0 2px;
  border-left: 1px solid #666;
}
.mel output {
  flex: 329 0 0;
  height: 13px;
  margin-right: 3px;
  background: #bcbcbc;
  border-top: 1px solid #888;
  border-left: 1px solid #888;
}
.help p {
  flex: 1;
  height: 14px;
  padding-left: 8px;
  border: 1px solid;
  border-color: #666 #f4f4f4 #f4f4f4 #666;
  font: 7px/13px "DejaVu Sans Mono", monospace;
}
</style>
